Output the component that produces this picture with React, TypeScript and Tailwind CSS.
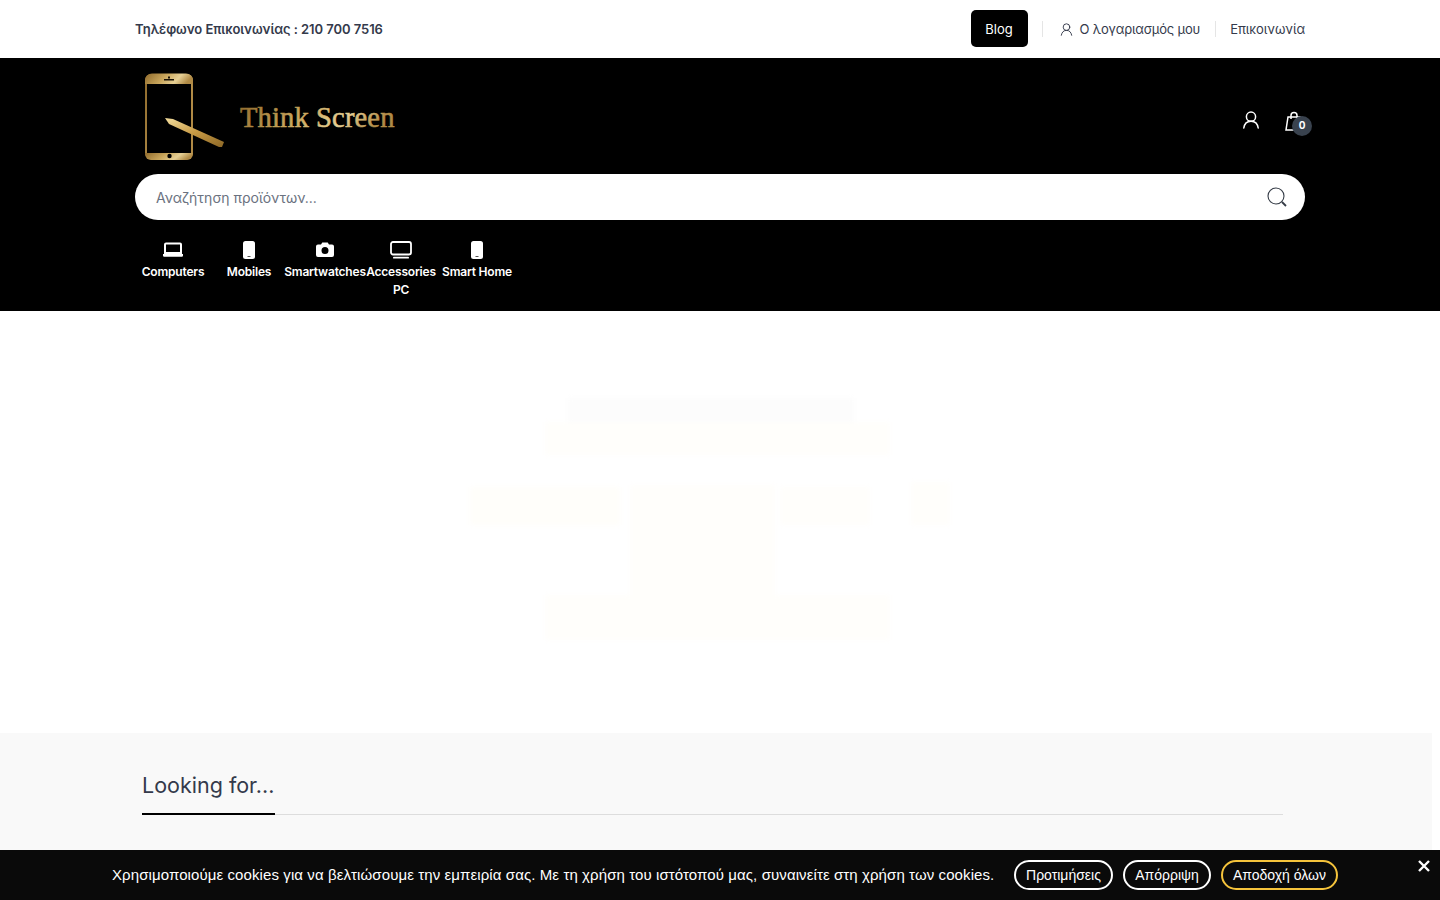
import React from "react";

const Logo = () => (
  <svg width="270" height="90" viewBox="0 0 270 90" className="block">
    <defs>
      <linearGradient id="g" x1="0" y1="0" x2="1" y2="0.2">
        <stop offset="0" stopColor="#8f6a2c" />
        <stop offset="0.45" stopColor="#c9a65c" />
        <stop offset="0.75" stopColor="#e6cf94" />
        <stop offset="1" stopColor="#b08a45" />
      </linearGradient>
      <linearGradient id="p" x1="0" y1="0" x2="1" y2="1">
        <stop offset="0" stopColor="#f4df9f" />
        <stop offset="0.5" stopColor="#c79a45" />
        <stop offset="1" stopColor="#8c6726" />
      </linearGradient>
    </defs>
    <rect x="11" y="2.500" width="46" height="84" rx="6" fill="none" stroke="url(#g)" strokeWidth="2" />
    <path d="M10 12 V8 a6 6 0 0 1 6-6 H52 a6 6 0 0 1 6 6 V12 Z" fill="url(#g)" />
    <path d="M10 81 V82 a6 6 0 0 0 6 6 H52 a6 6 0 0 0 6-6 V81 Z" fill="url(#g)" />
    <rect x="29" y="7" width="10" height="1.500" fill="#1a1206" />
    <rect x="33" y="4.500" width="2" height="2" fill="#1a1206" />
    <circle cx="34.500" cy="84" r="2.200" fill="#000" />
    <path d="M30 46 L38 47 L89 70 L87 75 L84 75 L34 52 Z" fill="url(#p)" />
    <text x="105" y="55" fontFamily="'Liberation Serif', serif" fontSize="28.500" fontWeight="400" stroke="url(#g)" strokeWidth="0.600" fill="url(#g)" letterSpacing="0.150">Think Screen</text>
  </svg>
);

const Laptop = () => (
  <svg width="22" height="16" viewBox="0 0 22 16"><path d="M4 1.500h14a1 1 0 0 1 1 1V11H3V2.500a1 1 0 0 1 1-1Z" fill="none" stroke="#fff" strokeWidth="2" /><path d="M1 12h20v1.500a1.200 1.200 0 0 1-1.200 1.200H2.200A1.200 1.200 0 0 1 1 13.500Z" fill="#fff" /></svg>
);
const Phone = () => (
  <svg width="12" height="18" viewBox="0 0 12 18"><rect width="12" height="18" rx="2.500" fill="#fff" /><rect x="4.500" y="15" width="3" height="1" fill="#555" /></svg>
);
const Camera = () => (
  <svg width="18" height="15" viewBox="0 0 18 15" className="mb-[2px]"><path fillRule="evenodd" d="M2 2.500h3L6.300.500h5.400L13 2.500h3a2 2 0 0 1 2 2V13a2 2 0 0 1-2 2H2a2 2 0 0 1-2-2V4.500a2 2 0 0 1 2-2ZM9 5a3.500 3.500 0 1 0 0 7 3.500 3.500 0 0 0 0-7Z" fill="#fff" /></svg>
);
const Monitor = () => (
  <svg width="22" height="18" viewBox="0 0 22 18"><rect x="1" y="1" width="20" height="12.500" rx="2" fill="none" stroke="#fff" strokeWidth="1.800" /><rect x="3" y="15.800" width="16" height="1.800" rx=".9" fill="#fff" /></svg>
);

const User = ({ size, color, sw }: { size: number; color: string; sw: number }) => (
  <svg width={size} height={size} viewBox="0 0 18 18" fill="none" stroke={color} strokeWidth={sw} strokeLinecap="round">
    <circle cx="9" cy="5.700" r="4.600" />
    <path d="M1.800 17c.6-4.200 3.300-6.800 7.200-6.800s6.600 2.600 7.200 6.800" />
  </svg>
);

const cats: { label: string; icon: React.ReactNode }[] = [
  { label: "Computers", icon: <Laptop /> },
  { label: "Mobiles", icon: <Phone /> },
  { label: "Smartwatches", icon: <Camera /> },
  { label: "Accessories PC", icon: <Monitor /> },
  { label: "Smart Home", icon: <Phone /> },
];

export default function App() {
  return (
    <div className="h-[900px] overflow-hidden bg-white font-['Inter',sans-serif]">
      <div className="mx-auto flex h-[58px] w-[1170px] items-center justify-between pb-[1px]">
        <span className="pt-[2px] text-[13px] font-semibold tracking-[-0.06px] text-[#343a4b]">Τηλέφωνο Επικοινωνίας : 210 700 7516</span>
        <div className="flex items-center text-[13px] text-[#343a4b]">
          <span className="flex h-[37px] w-[57px] items-center justify-center rounded-[5px] bg-black pt-[2px] text-white">Blog</span>
          <span className="ml-[14px] h-[16px] w-px bg-[#e5e5e5]" />
          <span className="ml-[17px] flex items-center gap-[7px] pt-[2px]">
            <User size={13} color="#343a4b" sw={1.300} />
            <span className="tracking-[-0.17px]">Ο λογαριασμός μου</span>
          </span>
          <span className="ml-[15px] h-[16px] w-px bg-[#e5e5e5]" />
          <span className="ml-[14px] pt-[2px] tracking-[-0.05px]">Επικοινωνία</span>
        </div>
      </div>

      <header className="h-[253px] bg-black">
        <div className="mx-auto w-[1170px]">
          <div className="flex h-[116px] items-center justify-between">
            <div className="pt-[1px]"><Logo /></div>
            <div className="mr-[2px] flex items-center gap-[25px] pt-[7px]">
              <User size={18} color="#fff" sw={1.500} />
              <div className="relative mt-[2px]">
                <svg width="18" height="20" viewBox="0 0 18 20" fill="none" stroke="#fff" strokeWidth="1.500" className="block">
                  <path d="M3 6h12l2 13H1L3 6Z" />
                  <path d="M6 8V4.500a3 3 0 0 1 6 0V8" />
                </svg>
                <span className="absolute left-[7px] top-[5px] flex h-[20px] w-[20px] items-center justify-center rounded-full bg-[#39424e] text-[10px] font-bold text-white">0</span>
              </div>
            </div>
          </div>
          <div className="flex h-[46px] items-center justify-between rounded-[23px] bg-white pl-[21px] pr-[18px]">
            <span className="text-[14px] text-[#6b7280]">Αναζήτηση προϊόντων...</span>
            <svg width="20" height="20" viewBox="0 0 20 20" fill="none" stroke="#333a45" strokeWidth="1.100">
              <circle cx="9" cy="9" r="8" />
              <path d="M15 15l4 4" strokeWidth="1.800" />
            </svg>
          </div>
          <nav className="mt-[20px] flex">
            {cats.map((c) => (
              <div key={c.label} className="flex w-[76px] flex-col items-center text-center text-[12px] font-semibold leading-[18px] tracking-[-0.2px] text-white">
                <div className="flex h-[20px] items-center justify-center">{c.icon}</div>
                <span className="mt-[3px] flex justify-center">
                  <span className={c.label === "Accessories PC" ? "w-[72px]" : "whitespace-nowrap"}>{c.label}</span>
                </span>
              </div>
            ))}
          </nav>
        </div>
      </header>

      <section className="flex h-[422px] items-center justify-center">
        <svg width="500" height="250" viewBox="0 0 500 250" className="blur-[2px]">
          <rect x="98" y="1" width="286" height="26" fill="#fcfcfc" />
          <rect x="75" y="25" width="345" height="33" fill="#fffefb" />
          <rect x="0" y="90" width="150" height="38" fill="#fffefa" />
          <rect x="310" y="90" width="90" height="38" fill="#fffefb" />
          <rect x="441" y="85" width="39" height="43" fill="#fffefb" />
          <rect x="160" y="88" width="145" height="155" fill="#fffefb" />
          <rect x="75" y="198" width="345" height="45" fill="#fffefb" />
        </svg>
      </section>

      <section className="h-[167px] w-[1432px] bg-[#f9f9f9] pl-[142px] pr-[149px] pt-[34px]">
        <div className="border-b border-[#dddddd]">
          <h2 className="mb-[-1px] inline-block h-[48px] w-[133px] whitespace-nowrap border-b-2 border-black text-[21.5px] font-normal leading-[36px] text-[#343a4b]">Looking for...</h2>
        </div>
      </section>

      <div className="fixed inset-x-0 bottom-0 flex h-[50px] items-center bg-[#0a0a0a] pl-[112px] font-['Liberation_Sans',sans-serif] text-[15px] text-white">
        <span className="w-[882px] whitespace-nowrap tracking-[0.095px]">Χρησιμοποιούμε cookies για να βελτιώσουμε την εμπειρία σας. Με τη χρήση του ιστότοπού μας, συναινείτε στη χρήση των cookies.</span>
        <span className="ml-[20px] flex h-[30px] w-[99px] items-center justify-center rounded-[15px] border-2 border-white text-[14px]">Προτιμήσεις</span>
        <span className="ml-[10px] flex h-[30px] w-[88px] items-center justify-center rounded-[15px] border-2 border-white text-[14px]">Απόρριψη</span>
        <span className="ml-[10px] flex h-[30px] w-[117px] items-center justify-center rounded-[15px] border-2 border-[#f5c33b] text-[14px]">Αποδοχή όλων</span>
        <svg width="12" height="12" viewBox="0 0 12 12" className="absolute right-[10px] top-[10px]" stroke="#fff" strokeWidth="2.400">
          <path d="M1 1l10 10M11 1L1 11" />
        </svg>
      </div>
    </div>
  );
}
